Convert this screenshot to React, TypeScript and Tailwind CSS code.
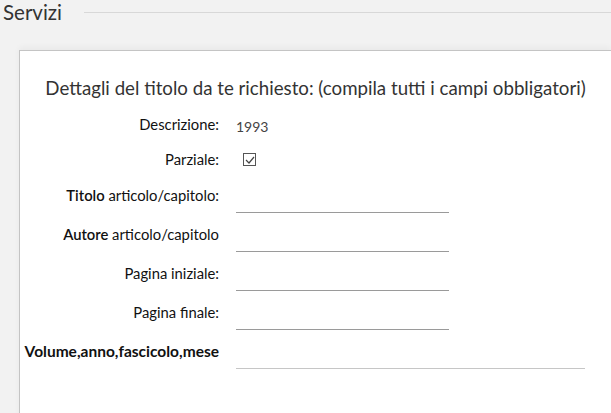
import React from "react";

const font = { fontFamily: "Lato, 'Noto Sans', sans-serif" };

function Row({ label, children, h = "h-[39px]" }: { label: React.ReactNode; children: React.ReactNode; h?: string }) {
  return (
    <div className={`flex items-start ${h}`}>
      <div className="w-[199px] shrink-0 text-right text-[14.8px] leading-[20px] text-[#111] whitespace-nowrap">{label}</div>
      <div className="ml-[17px]">{children}</div>
    </div>
  );
}

function Input({ wide = false }: { wide?: boolean }) {
  return (
    <div
      className={
        wide
          ? "h-[28px] w-[349px] border-b border-[#c6c6c6]"
          : "h-[28px] w-[213px] border-b border-[#9a9a9a]"
      }
    />
  );
}

export default function App() {
  return (
    <div className="w-[611px] h-[413px] bg-[#f2f2f2] overflow-hidden" style={font}>
      <div className="flex items-center h-[24px] pl-[3px]">
        <span className="text-[20.5px] leading-[24px] text-[#333]">Servizi</span>
        <div className="flex-1 ml-[22px] border-t border-[#d8d8d8]" />
      </div>
      <div className="ml-[19px] mt-[26px] h-[400px] bg-white border-t border-l border-[#c4c4c4] shadow-[0_-3px_6px_rgba(0,0,0,0.04)]">
        <div className="pt-[25px] text-center text-[18.7px] leading-[24px] text-[#333] whitespace-nowrap">
          Dettagli del titolo da te richiesto: (compila tutti i campi obbligatori)
        </div>
        <div className="mt-[14px]">
          <Row label="Descrizione:" h="h-[35px]">
            <span className="text-[14px] leading-[20px] text-[#444]">1993</span>
          </Row>
          <Row label="Parziale:" h="h-[36px]">
            <div className="ml-[7px] mt-[4px] w-[13px] h-[13px] border border-[#555] flex items-center justify-center">
              <svg width="10" height="8" viewBox="0 0 10 8" fill="none">
                <path d="M1 4l3 3 5-6" stroke="#444" strokeWidth="1.2" />
              </svg>
            </div>
          </Row>
          <Row label={<><b className="font-semibold">Titolo</b> articolo/capitolo:</>}>
            <Input />
          </Row>
          <Row label={<><b className="font-semibold">Autore</b> articolo/capitolo</>}>
            <Input />
          </Row>
          <Row label="Pagina iniziale:">
            <Input />
          </Row>
          <Row label="Pagina finale:">
            <Input />
          </Row>
          <Row label={<b className="font-bold text-[15.5px]">Volume,anno,fascicolo,mese</b>}>
            <Input wide />
          </Row>
        </div>
      </div>
    </div>
  );
}
